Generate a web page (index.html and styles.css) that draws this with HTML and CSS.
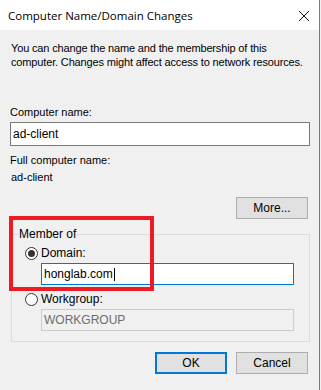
FILE: index.html
```html
<!DOCTYPE html>
<html lang="en">
<head>
  <meta charset="UTF-8" />
  <meta name="viewport" content="width=device-width, initial-scale=1" />
  <title>Computer Name/Domain Changes</title>
  <link rel="stylesheet" href="styles.css">
</head>
<body>

  <div class="window">
    <div class="titlebar">
      <span class="title">Computer Name/Domain Changes</span>
      <svg class="close" width="12" height="12" viewBox="0 0 12 12">
        <path d="M1 1 L11 11 M11 1 L1 11" stroke="#111" stroke-width="1" fill="none" />
      </svg>
    </div>

    <div class="content">
      <p class="intro">You can change the name and the membership of this<br>computer. Changes might affect access to network resources.</p>

      <div class="label">Computer name:</div>
      <div class="textbox name-box">ad-client</div>

      <div class="label full-label">Full computer name:</div>
      <div class="value">ad-client</div>

      <div class="more-row">
        <button class="btn">More...</button>
      </div>

      <fieldset class="group">
        <legend>Member of</legend>
        <div class="radio-row domain-row">
          <span class="radio checked"></span>
          <span>Domain:</span>
        </div>
        <div class="textbox focused">honglab.com<span class="caret"></span></div>

        <div class="radio-row work-row">
          <span class="radio"></span>
          <span>Workgroup:</span>
        </div>
        <div class="textbox disabled">WORKGROUP</div>
      </fieldset>

      <div class="actions">
        <button class="btn btn-default">OK</button>
        <button class="btn">Cancel</button>
      </div>
    </div>

    <!-- annotation box drawn over the dialog -->
    <div class="highlight"></div>
  </div>

</body>
</html>
```

FILE: styles.css
```css
body {
  margin: 0;
  background-color: #f0f0f0;
  font-family: "Liberation Sans", Arial, sans-serif;
  font-size: 11px;
  color: #000;
}
.window {
  position: relative;
  width: 319px;
  height: 390px;
  border-right: 1px solid #7a7a7a;
  background-color: #f0f0f0;
  overflow: hidden;
}
.titlebar {
  height: 30px;
  background: white;
  display: flex;
  align-items: center;
  justify-content: space-between;
  padding: 0 9px 0 8px;
}
.title {
  font-family: "Open Sans", "Noto Sans", sans-serif;
  font-size: 11.5px;
  color: #000;
}
.close {
  margin-top: 1px;
}
.content {
  padding: 0 9px 0 10px;
}
.intro {
  margin: 0;
  padding: 11px 0 0 1px;
  line-height: 14px;
  white-space: nowrap;
  letter-spacing: -0.15px;
}
.label {
  margin-top: 36px;
  line-height: 14px;
}
.textbox {
  height: 22px;
  box-sizing: border-box;
  border: 1px solid #7a7a7a;
  background: white;
  padding: 0 2px;
  line-height: 20px;
  font-size: 12px;
}
.name-box {
  margin-top: 3px;
  height: 24px;
  line-height: 22px;
}
.full-label {
  margin-top: 7px;
}
.value {
  margin-top: 3px;
  padding-left: 1px;
  line-height: 14px;
}
.more-row {
  display: flex;
  justify-content: flex-end;
  margin-top: 13px;
  padding-right: 2px;
}
.btn {
  width: 72px;
  height: 22px;
  box-sizing: border-box;
  background-color: #e1e1e1;
  border: 1px solid #adadad;
  font-family: "Liberation Sans", Arial, sans-serif;
  font-size: 12px;
  color: #000;
  padding: 0;
}
.btn-default {
  border: 2px solid #0078d7;
}
.group {
  margin: 8px 0 0 1px;
  padding: 0 15px 10px 0;
  border: 1px solid #dcdcdc;
}
.group legend {
  margin-left: 6px;
  padding: 0 1px;
  font-size: 12px;
  line-height: 14px;
}
.radio-row {
  display: flex;
  align-items: center;
  gap: 3px;
  margin-left: 13px;
  font-size: 12px;
  height: 16px;
}
.domain-row {
  margin-top: 4px;
}
.work-row {
  margin-top: 6px;
}
.radio {
  width: 13px;
  height: 13px;
  box-sizing: border-box;
  border: 1px solid #333;
  border-radius: 50%;
  background: white;
  display: flex;
  align-items: center;
  justify-content: center;
}
.radio.checked::after {
  content: "";
  width: 7px;
  height: 7px;
  border-radius: 50%;
  background: #333;
}
.group .textbox {
  margin: 2px 0 0 29px;
}
.focused {
  border-color: #0078d7;
}
.caret {
  display: inline-block;
  width: 1px;
  height: 13px;
  background: #000;
  vertical-align: middle;
  margin-left: 1px;
}
.disabled {
  border-color: #cccccc;
  background-color: #f0f0f0;
  color: #6d6d6d;
}
.actions {
  display: flex;
  justify-content: flex-end;
  gap: 9px;
  margin-top: 10px;
  padding-right: 2px;
}
.highlight {
  position: absolute;
  left: 9px;
  top: 216px;
  width: 145px;
  height: 75px;
  box-sizing: border-box;
  border: 4px solid #ed1c24;
}
```
